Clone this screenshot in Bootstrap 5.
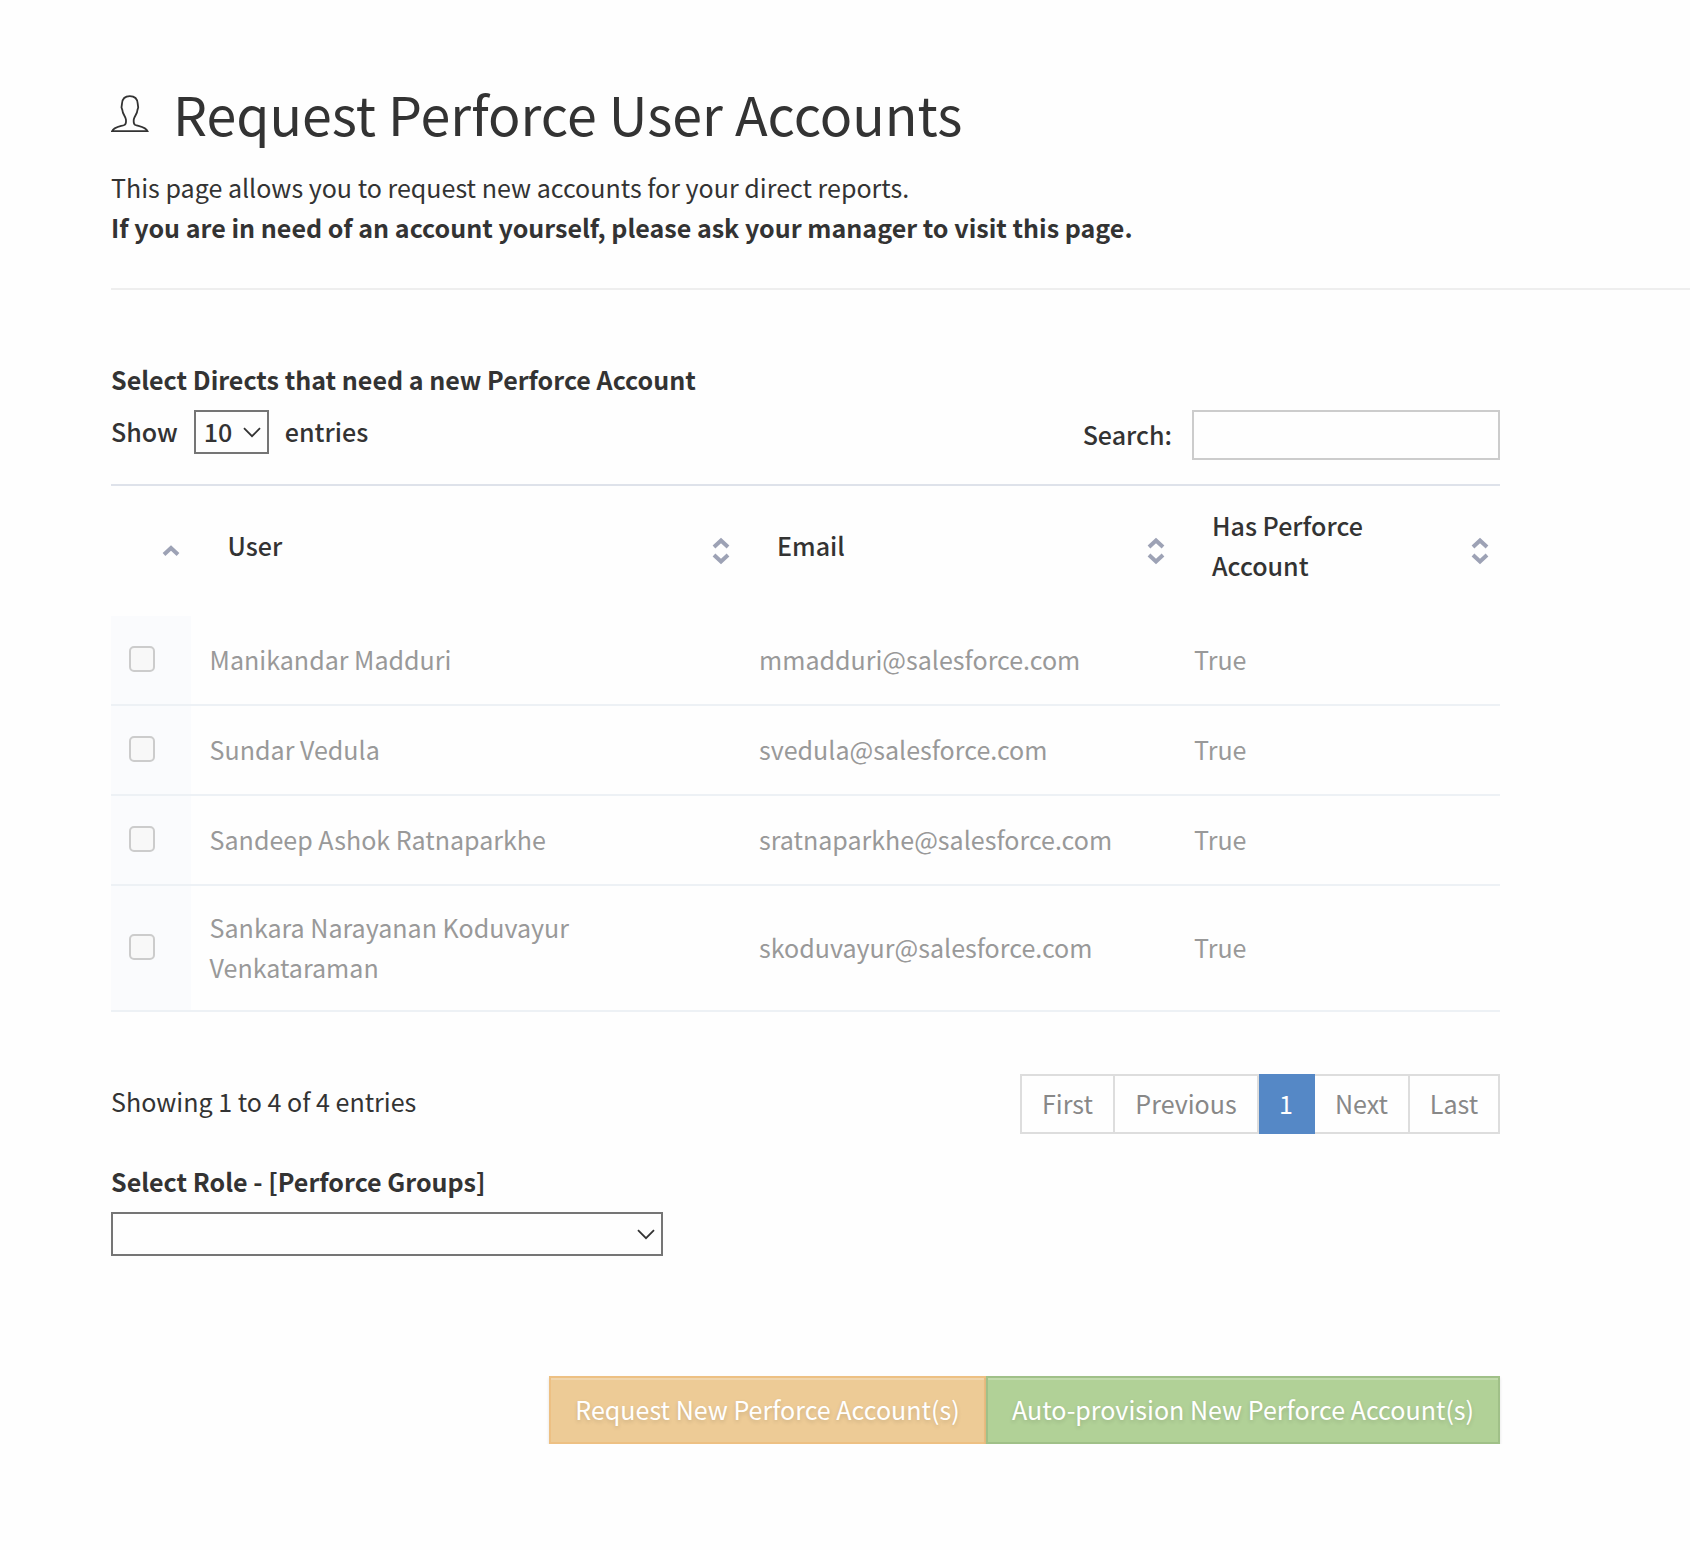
<!DOCTYPE html>
<html lang="en">
<head>
<meta charset="utf-8">
<meta name="viewport" content="width=device-width, initial-scale=1">
<title>Request Perforce User Accounts</title>
<link href="https://cdn.jsdelivr.net/npm/bootstrap@5.3.0/dist/css/bootstrap.min.css" rel="stylesheet">
<style>
body{font-family:"Noto Sans CJK SC","Noto Sans",sans-serif;font-size:25.06px;line-height:40px;color:#333;background:#fefefe}
.page-shell{padding:85px 0 0 111px}
.main-col{width:1389px}
h1{font-size:53.7px;line-height:56px;font-weight:400}
.user-icon{width:38px;height:38px;margin:10px 24px 0 0;flex:none}
.semi{font-weight:500}
.intro{margin-top:26px}
.rule{height:2px;background:#eee;margin-top:41px}
.directs{margin-top:69px}
.controls{margin-top:11px}
.ctl-text{padding-bottom:2px}
.box-select{height:44px;border:2px solid #757575;border-radius:0;padding:0 6px 0 8px;background:#fefefe}
.box-length{width:75px}
.box-role{width:552px;margin-top:11px}
.search-box{width:308px;height:50px;border:2px solid #ccc;border-radius:0;margin-left:20px;background:#fefefe}
.chev{width:18px;height:11px;flex:none}
.reports{table-layout:fixed;border-top:2px solid #dee2ea;margin:24px 0 0;--bs-table-bg:transparent}
.col-pick{width:80px}
.col-user{width:550px}
.col-email{width:435px}
.reports th{font-weight:500;color:#333;border:0;padding:19px 18px 31px 36px;vertical-align:middle}
.reports th:nth-child(2){padding-left:36.6px}
.reports td{color:#999;border-bottom:2px solid #edf1f5;padding:23px 18px 25px;vertical-align:middle}
.reports td:nth-child(2){padding-left:18.6px}
.reports td:first-child{background:#fafbfd;padding:24px 18px}
.reports tr:last-child td{padding-top:21px;padding-bottom:23px}
.reports .form-check-input{display:block;width:26px;height:26px;margin:-2px 0 0;border:2px solid #ccc;border-radius:5px;background:#f8f8f8;opacity:1}
.reports tr:last-child .form-check-input{margin-top:0}
.sorter{width:18px;height:28px;flex:none;margin:12px -7px 0 0}
.table-foot{margin-top:62px}
.info{margin-top:7px}
.pagination{--bs-pagination-border-radius:0}
.page-link{height:60px;padding:7px 0;border:2px solid #ddd;border-radius:0!important;color:#888;background:#fefefe;line-height:40px;font-size:25.06px;text-align:center}
.page-item:not(:first-child) .page-link{margin-left:-2px}
.page-item.active .page-link{background:#5588c6;border-color:#5588c6;color:#fff;margin-left:0;padding-right:2px}
.pg-first{width:95px}.pg-prev{width:146px}.pg-num{width:56px}.pg-next{width:97px}.pg-last{width:92px}
.role{margin-top:27px}
.actions{margin-top:120px}
.act{height:68px;border:2px solid;border-radius:0;font-size:25.06px;line-height:40px;padding:11px 0 13px;text-shadow:0 2px 4px rgba(0,0,0,.14);box-shadow:inset 0 2px 0 rgba(255,255,255,.22),0 2px 3px rgba(0,0,0,.12)}
.act:disabled{opacity:1;color:#fff}
.act-request:disabled{width:437px;background:#edcb96;border-color:#edc083}
.act-auto:disabled{width:514px;background:#b1d197;border-color:#a0c088}
</style>
</head>
<body>
<main class="page-shell">
<header>
<div class="d-flex align-items-start">
<svg class="user-icon" viewBox="0 0 38 39" preserveAspectRatio="none" fill="none" stroke="#333" stroke-width="1.8"><path d="M1 37.2H36.6C35 32.8 28.2 32.2 24.4 30.8C22.4 30 22.5 27.6 22.8 25C23.2 21.8 26.3 19.5 26.4 15.6L27.2 12.8L26.7 8.8C26.4 3.6 23.8 1.1 18.8 1.1S11.3 3.6 11 8.8L10.5 12.8L11.4 15.6C11.5 19.5 14.4 21.8 14.9 25C15.2 27.6 15.3 30 13.3 30.8C9.5 32.2 2.6 32.8 1 37.2Z"/></svg>
<h1 class="mb-0">Request Perforce User Accounts</h1>
</div>
<div class="intro">This page allows you to request new accounts for your direct reports.<br><strong>If you are in need of an account yourself, please ask your manager to visit this page.</strong></div>
<div class="rule"></div>
</header>
<section class="main-col directs">
<strong class="d-block">Select Directs that need a new Perforce Account</strong>
<div class="controls d-flex justify-content-between align-items-start semi">
<div class="d-flex align-items-center"><span class="ctl-text">Show</span>
<span class="box-select box-length d-flex align-items-center justify-content-between mx-3"><span class="ctl-text">10</span><svg class="chev" viewBox="0 0 18 11" fill="none" stroke="#333" stroke-width="1.8"><path d="M1 1.2L9 9.2L17 1.2"/></svg></span><span class="ctl-text">entries</span></div>
<label class="d-flex align-items-center"><span class="ctl-text">Search:</span><input class="search-box" type="text"></label>
</div>
<table class="table reports">
<colgroup><col class="col-pick"><col class="col-user"><col class="col-email"><col></colgroup>
<thead><tr>
<th><div class="d-flex align-items-center justify-content-end"><svg class="sorter" viewBox="0 0 18 28" fill="none" stroke="#9da2b5" stroke-width="4"><path d="M2 17.5L9 11L16 17.5"/></svg></div></th>
<th><div class="d-flex align-items-center justify-content-between"><span>User</span><svg class="sorter" viewBox="0 0 18 28" fill="none" stroke="#9da2b5" stroke-width="4"><path d="M2 10L9 3.5L16 10M2 18L9 24.5L16 18"/></svg></div></th>
<th><div class="d-flex align-items-center justify-content-between"><span>Email</span><svg class="sorter" viewBox="0 0 18 28" fill="none" stroke="#9da2b5" stroke-width="4"><path d="M2 10L9 3.5L16 10M2 18L9 24.5L16 18"/></svg></div></th>
<th><div class="d-flex align-items-center justify-content-between"><span>Has Perforce<br>Account</span><svg class="sorter" viewBox="0 0 18 28" fill="none" stroke="#9da2b5" stroke-width="4"><path d="M2 10L9 3.5L16 10M2 18L9 24.5L16 18"/></svg></div></th>
</tr></thead>
<tbody>
<tr><td><input class="form-check-input" type="checkbox" disabled></td><td>Manikandar Madduri</td><td>mmadduri@salesforce.com</td><td>True</td></tr>
<tr><td><input class="form-check-input" type="checkbox" disabled></td><td>Sundar Vedula</td><td>svedula@salesforce.com</td><td>True</td></tr>
<tr><td><input class="form-check-input" type="checkbox" disabled></td><td>Sandeep Ashok Ratnaparkhe</td><td>sratnaparkhe@salesforce.com</td><td>True</td></tr>
<tr><td><input class="form-check-input" type="checkbox" disabled></td><td>Sankara Narayanan Koduvayur Venkataraman</td><td>skoduvayur@salesforce.com</td><td>True</td></tr>
</tbody>
</table>
<div class="table-foot d-flex justify-content-between align-items-start">
<div class="info">Showing 1 to 4 of 4 entries</div>
<ul class="pagination mb-0">
<li class="page-item"><a class="page-link pg-first">First</a></li>
<li class="page-item"><a class="page-link pg-prev">Previous</a></li>
<li class="page-item active"><a class="page-link pg-num">1</a></li>
<li class="page-item"><a class="page-link pg-next">Next</a></li>
<li class="page-item"><a class="page-link pg-last">Last</a></li>
</ul>
</div>
<div class="role">
<strong class="d-block">Select Role - [Perforce Groups]</strong>
<div class="box-select box-role d-flex align-items-center justify-content-end"><svg class="chev" viewBox="0 0 18 11" fill="none" stroke="#333" stroke-width="1.8"><path d="M1 1.2L9 9.2L17 1.2"/></svg></div>
</div>
<div class="actions d-flex justify-content-end">
<button class="btn act act-request" disabled>Request New Perforce Account(s)</button>
<button class="btn act act-auto" disabled>Auto-provision New Perforce Account(s)</button>
</div>
</section>
</main>
<script src="https://cdn.jsdelivr.net/npm/bootstrap@5.3.0/dist/js/bootstrap.bundle.min.js"></script>
</body>
</html>
